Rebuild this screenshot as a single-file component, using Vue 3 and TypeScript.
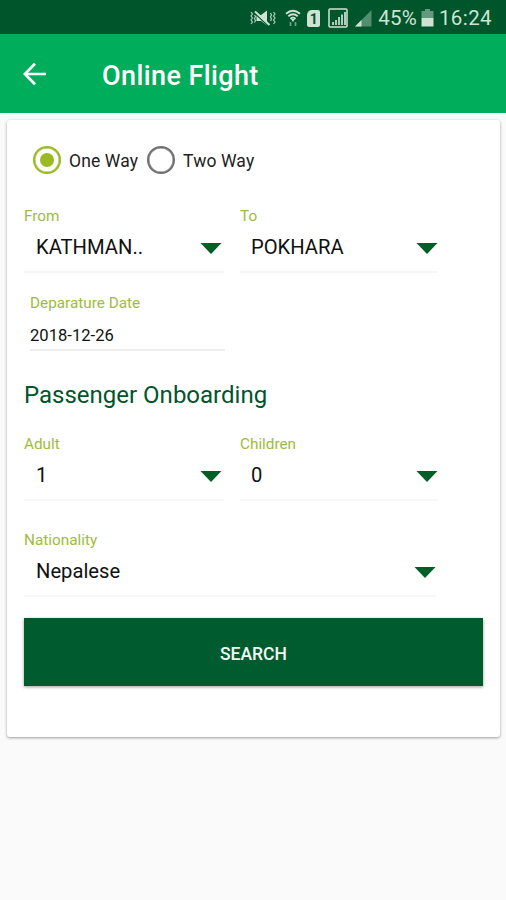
<script setup lang="ts">
import { ref } from 'vue'

interface Field {
  label: string
  value: string
}

const trip = ref<string>('One Way')
const tripTypes: string[] = ['One Way', 'Two Way']
const route: Field[] = [
  { label: 'From', value: 'KATHMAN..' },
  { label: 'To', value: 'POKHARA' },
]
const passengers: Field[] = [
  { label: 'Adult', value: '1' },
  { label: 'Children', value: '0' },
]
</script>

<template>
  <div class="screen">
    <div class="status">
      <svg class="mute" width="27" height="18" viewBox="0 0 27 18">
        <path d="M7.500 6h4.500l6-4.500v15L12 12H7.500z" fill="currentColor" />
        <path d="M5 3.500l15 14" stroke="#00552b" stroke-width="1.500" />
        <path d="M6 2.500l14.500 13.500" stroke="currentColor" stroke-width="2" />
        <path d="M2 3l1.500 2L2 7l1.500 2L2 11l1.500 2L2 15M5.500 6l1 1.500-1 2 1 2-1 2M21.500 4l1 2-1 2 1 2-1 2M24.500 3L26 5l-1.500 2L26 9l-1.500 2 1.500 2-1.500 2" fill="none" stroke="currentColor" stroke-width="1.200" opacity=".85" />
      </svg>
      <svg class="wifi" width="16" height="18" viewBox="0 0 16 18">
        <path d="M1 4.700Q8-1.200 15 4.700M3.300 7.300Q8 3.200 12.700 7.300M5.400 9.800Q8 7.400 10.600 9.800" fill="none" stroke="currentColor" stroke-width="1.800" />
        <path d="M6 10h4L8 13z" fill="currentColor" />
        <path d="M5.500 13v4M10.500 13v4" fill="none" stroke="currentColor" stroke-width="1.700" opacity=".55" />
      </svg>
      <div class="sim">1</div>
      <svg class="boxed" width="20" height="20" viewBox="0 0 20 20">
        <rect x="1" y="1" width="18" height="18" rx="1" fill="none" stroke="currentColor" stroke-width="1.500" />
        <path d="M5 17v-3M8 17v-5M11 17V9M14 17V6.500M17 17V4" stroke="currentColor" stroke-width="2" opacity=".85" />
      </svg>
      <svg class="signal" width="18" height="18" viewBox="0 0 18 18">
        <path d="M1 17.500L17.500 1v16.500z" fill="currentColor" opacity=".4" />
        <path d="M1 17.500L7.500 11v6.500z" fill="currentColor" />
      </svg>
      <span class="percent">45%</span>
      <svg class="battery" width="13" height="18" viewBox="0 0 13 18">
        <path d="M4 0h5v2h3.500v7H.5V2H4z" fill="currentColor" opacity=".48" />
        <path d="M.5 9h12v8.500H.5z" fill="currentColor" />
      </svg>
      <span class="clock">16:24</span>
    </div>

    <header class="bar">
      <svg class="back" width="24" height="24" viewBox="0 0 24 24">
        <path d="M12 1.700L1.800 12 12 22.300M2 12h21" fill="none" stroke="#fff" stroke-width="2.700" />
      </svg>
      <h1>Online Flight</h1>
    </header>

    <main class="card">
      <div class="trips">
        <button
          v-for="type in tripTypes"
          :key="type"
          class="trip"
          :class="{ on: trip === type }"
          @click="trip = type"
        >
          <span class="ring"></span>
          <span class="trip-name">{{ type }}</span>
        </button>
      </div>

      <div class="pair">
        <div v-for="f in route" :key="f.label" class="field">
          <div class="label">{{ f.label }}</div>
          <div class="select">
            <span>{{ f.value }}</span>
            <svg class="caret" width="22" height="11" viewBox="0 0 22 11"><path d="M.5 0h21L11 11z" /></svg>
          </div>
        </div>
      </div>

      <div class="date">
        <div class="label">Deparature Date</div>
        <div class="date-value">2018-12-26</div>
      </div>

      <h2>Passenger Onboarding</h2>

      <div class="pair">
        <div v-for="f in passengers" :key="f.label" class="field">
          <div class="label">{{ f.label }}</div>
          <div class="select">
            <span>{{ f.value }}</span>
            <svg class="caret" width="22" height="11" viewBox="0 0 22 11"><path d="M.5 0h21L11 11z" /></svg>
          </div>
        </div>
      </div>

      <div class="nation">
        <div class="label">Nationality</div>
        <div class="select">
          <span>Nepalese</span>
          <svg class="caret" width="22" height="11" viewBox="0 0 22 11"><path d="M.5 0h21L11 11z" /></svg>
        </div>
      </div>

      <button class="search">SEARCH</button>
    </main>
  </div>
</template>

<style>
body {
  margin: 0;
  background: #fafafa;
}
</style>

<style scoped>
.screen {
  box-sizing: border-box;
  width: 100%;
  height: 900px;
  background: #fafafa;
  font-family: Roboto, sans-serif;
  color: #111;
}
.status {
  box-sizing: border-box;
  display: flex;
  align-items: center;
  justify-content: flex-end;
  height: 34px;
  padding: 2px 14px 0 0;
  background: #00552b;
  color: #cfe3d5;
  font-size: 20.500px;
}
.status svg {
  flex: none;
}
.wifi {
  margin-left: 9px;
}
.sim {
  width: 13px;
  height: 17px;
  margin-left: 6px;
  border-radius: 2px;
  border-top-left-radius: 5px;
  background: #cfe3d5;
  color: #00552b;
  font-size: 14px;
  font-weight: 700;
  line-height: 18px;
  text-align: center;
}
.boxed {
  margin-left: 8px;
}
.signal {
  margin-left: 6px;
}
.percent {
  margin-left: 6px;
  letter-spacing: 0.2px;
}
.battery {
  margin-left: 4px;
}
.clock {
  margin-left: 5px;
  letter-spacing: 0.4px;
}
.bar {
  display: flex;
  align-items: center;
  height: 79px;
  padding-left: 23px;
  background: #00ad5a;
}
.bar h1 {
  margin: 4px 0 0 55px;
  color: #fff;
  font-size: 27px;
  font-weight: 500;
  letter-spacing: 0.4px;
}
.card {
  box-sizing: border-box;
  width: 493px;
  height: 617px;
  margin: 7px 0 0 7px;
  padding: 25px 17px 0;
  border-radius: 3px;
  background: #fff;
  box-shadow: 0 1px 3px rgba(0, 0, 0, 0.38);
}
button {
  border: 0;
  font-family: inherit;
}
.trips {
  display: flex;
  gap: 9px;
  padding-left: 9px;
}
.trip {
  display: flex;
  align-items: center;
  gap: 8px;
  padding: 0;
  background: none;
  color: #222;
  font-size: 17.500px;
  letter-spacing: 0.12px;
  line-height: 28px;
}
.trip-name {
  padding-top: 2px;
}
.ring {
  display: grid;
  place-items: center;
  box-sizing: border-box;
  width: 28px;
  height: 28px;
  border: 2px solid #707070;
  border-radius: 50%;
  box-shadow: inset 0 0 0 0.5px #707070;
}
.on .ring {
  border-color: #9aba22;
  box-shadow: inset 0 0 0 0.5px #9aba22;
}
.on .ring::after {
  content: '';
  width: 14px;
  height: 14px;
  border-radius: 50%;
  background: #9aba22;
}
.pair {
  display: grid;
  grid-template-columns: 200px 198px;
  column-gap: 16px;
}
.trips + .pair {
  margin-top: 31px;
}
.label {
  color: #9dbc3c;
  font-size: 15.300px;
  line-height: 20px;
}
.select {
  display: flex;
  align-items: center;
  justify-content: space-between;
  height: 42px;
  padding: 0 0 3px 12px;
  border-bottom: 2px solid #f6f6f6;
  font-size: 20.200px;
}
.field + .field .select {
  padding-left: 11px;
}
.caret {
  margin: 3px 0 0;
  fill: #005f24;
}
.field:first-child .caret {
  margin-right: 2px;
}
.date {
  width: 195px;
  margin: 20px 0 0 6px;
}
.date-value {
  height: 36px;
  border-bottom: 2px solid #eee;
  font-size: 16.600px;
  line-height: 45px;
}
h2 {
  margin: 28px 0 23px;
  color: #00552b;
  font-size: 24px;
  font-weight: 400;
  line-height: 32px;
}
.nation {
  width: 412px;
}
.pair + .nation {
  margin-top: 29px;
}
.search {
  display: block;
  width: 459px;
  height: 68px;
  margin-top: 21px;
  padding: 3px 0 0;
  background: #005c2e;
  box-shadow: 0 1px 3px rgba(0, 0, 0, 0.4);
  color: #f2f7f3;
  font-size: 17.500px;
  font-weight: 500;
}
</style>
